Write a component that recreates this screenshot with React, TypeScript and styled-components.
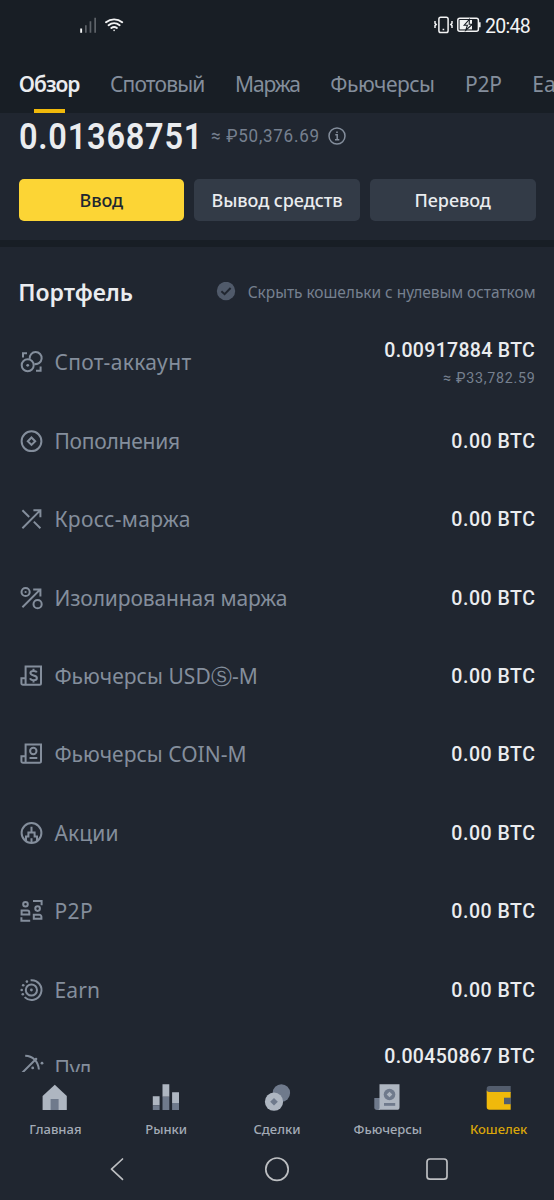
import React, { ReactNode } from 'react';
import styled, { createGlobalStyle } from 'styled-components';

const color = {
  header: '#181e25',
  body: '#202630',
  button: '#333b47',
  text: '#eaecef',
  muted: '#848e9c',
  dim: '#76808f',
  yellow: '#fcd535',
  gold: '#f0b90b',
};

const GlobalStyle = createGlobalStyle`
  * { box-sizing: border-box; }
  body { margin: 0; background: ${color.body}; font-family: "Noto Sans", Roboto, "Liberation Sans", sans-serif; }
`;

const Screen = styled.div`
  display: flex;
  flex-direction: column;
  width: 554px;
  height: 1200px;
  overflow: hidden;
  background: ${color.body};
`;

const Header = styled.header`
  flex: none;
  height: 113px;
  background: ${color.header};
`;

const StatusBar = styled.div`
  display: flex;
  align-items: center;
  height: 50px;
  padding: 0 24px 0 79px;
`;

const StatusGroup = styled.div<{ $end?: boolean }>`
  display: flex;
  align-items: center;
  gap: ${(p) => (p.$end ? 4 : 6)}px;
  margin-left: ${(p) => (p.$end ? 'auto' : '0')};
`;

const Clock = styled.span`
  color: #f2f3f4;
  font-family: Roboto, sans-serif;
  font-size: 19.5px;
  line-height: 24px;
  letter-spacing: -0.7px;
  padding-top: 3px;
`;

const Tabs = styled.nav`
  display: flex;
  gap: 30.6px;
  height: 63px;
  padding-left: 18.8px;
  overflow: hidden;
`;

const Tab = styled.a<{ $active?: boolean; $spacing: number }>`
  flex: none;
  display: flex;
  flex-direction: column;
  align-items: center;
  justify-content: space-between;
  padding-top: 20px;
  color: ${(p) => (p.$active ? color.text : color.muted)};
  font-size: 21px;
  font-weight: ${(p) => (p.$active ? 600 : 400)};
  line-height: 28px;
  letter-spacing: ${(p) => p.$spacing}px;
  white-space: nowrap;
`;

const TabMark = styled.span`
  width: 31px;
  height: 4px;
  background: ${color.gold};
`;

const Balance = styled.section`
  flex: none;
  height: 127px;
  padding: 4px 18.5px 0;
`;

const BalanceLine = styled.div`
  display: flex;
  align-items: center;
  height: 40px;
  font-family: Roboto, "Noto Sans", sans-serif;
`;

const Amount = styled.strong`
  width: 191.5px;
  margin-left: 0.8px;
  color: ${color.text};
  font-size: 37px;
  font-weight: 600;
  line-height: 40px;
  letter-spacing: 0.85px;
  transform: scaleX(0.88);
  transform-origin: left;
`;

const Fiat = styled.span`
  width: 116px;
  margin-bottom: 3px;
  color: ${color.dim};
  font-size: 18.5px;
  letter-spacing: 0.8px;
  white-space: nowrap;
  transform: scaleX(0.92);
  transform-origin: left;
`;

const Actions = styled.div`
  display: grid;
  grid-template-columns: repeat(3, 1fr);
  gap: 10px;
  margin-top: 22px;
`;

const ActionButton = styled.button<{ $primary?: boolean }>`
  height: 42px;
  padding: 0;
  border: 0;
  border-radius: 5px;
  background: ${(p) => (p.$primary ? color.yellow : color.button)};
  color: ${(p) => (p.$primary ? '#202630' : color.text)};
  font-family: inherit;
  font-size: 18px;
  font-weight: 500;
  letter-spacing: -0.05px;
`;

const Divider = styled.div`
  flex: none;
  height: 7px;
  background: ${color.header};
`;

const Portfolio = styled.section`
  flex: none;
  height: 825px;
  overflow: hidden;
`;

const PortfolioHead = styled.div`
  display: flex;
  align-items: center;
  justify-content: space-between;
  height: 76px;
  padding: 14px 18.5px 0 18.2px;
`;

const Title = styled.h2`
  margin: 0;
  color: ${color.text};
  font-size: 23px;
  font-weight: 600;
  line-height: 30px;
`;

const HideZero = styled.label`
  display: flex;
  align-items: center;
  gap: 12px;
  color: ${color.dim};
  font-size: 15.5px;
  letter-spacing: -0.04px;
`;

const WalletRow = styled.div`
  display: flex;
  align-items: center;
  height: 78.45px;
  padding: 0 19px;
`;

const WalletName = styled.span<{ $spacing: number }>`
  margin-left: 11.4px;
  color: ${color.muted};
  font-size: 21px;
  line-height: 28px;
  letter-spacing: ${(p) => p.$spacing}px;
`;

const WalletValue = styled.div<{ $double?: boolean }>`
  display: flex;
  flex-direction: column;
  align-items: flex-end;
  margin-left: auto;
  padding-top: ${(p) => (p.$double ? 3 : 0)}px;
  font-family: Roboto, "Noto Sans", sans-serif;
`;

const Coins = styled.span<{ $spacing: number }>`
  margin-right: ${(p) => -p.$spacing}px;
  color: ${color.text};
  font-size: 21px;
  font-weight: 500;
  line-height: 28px;
  letter-spacing: ${(p) => p.$spacing}px;
  transform: scaleX(0.93);
  transform-origin: right;
`;

const Approx = styled.span`
  margin-right: -0.8px;
  color: ${color.dim};
  font-size: 15.5px;
  line-height: 28px;
  letter-spacing: 0.8px;
  transform: scaleX(0.92);
  transform-origin: right;
`;

const BottomNav = styled.nav`
  flex: none;
  display: grid;
  grid-template-columns: repeat(5, 1fr);
  height: 70px;
  padding-top: 12px;
`;

const NavItem = styled.a<{ $active?: boolean }>`
  display: flex;
  flex-direction: column;
  align-items: center;
  gap: 7px;
  color: ${(p) => (p.$active ? '#d9a50a' : '#a3abb6')};
  font-size: 13px;
  font-weight: 500;
  line-height: 20px;
`;

const SystemNav = styled.div`
  flex: none;
  display: flex;
  justify-content: center;
  gap: 132px;
  height: 58px;
  padding-top: 13px;
`;

const GlyphSvg = styled.svg`
  flex: none;
  overflow: visible;
`;

const Glyph = ({ children }: { children: ReactNode }) => (
  <GlyphSvg width="24" height="24" viewBox="0 0 24 24" fill="none" stroke={color.muted} strokeWidth="2">
    {children}
  </GlyphSvg>
);

const futuresFrame = <path d="M6.6 20.8V2.4H22V19.3a1.5 1.5 0 0 1-1.5 1.5H4a1.6 1.6 0 0 1-1.6-1.6V14.2H6.6V20.8" />;

const icons = {
  spot: (
    <Glyph>
      <path d="M10.7 8.8A6 6 0 1 1 15.5 14" />
      <circle cx="8.7" cy="15.3" r="6" />
      <circle cx="8.7" cy="15.3" r="1.4" fill={color.muted} stroke="none" />
      <path d="M4 7.6V3.2H8M17 20.8h4.6V16.4" />
    </Glyph>
  ),
  funding: (
    <Glyph>
      <circle cx="12.5" cy="12.2" r="9.9" />
      <path d="M12.5 8.5 16.2 12.2 12.5 15.9 8.8 12.2Z" />
    </Glyph>
  ),
  cross: (
    <Glyph>
      <path d="M3.4 21.2 21.2 3.4M14.4 3.3H21.4V10.3M3.4 3.2 10.2 10M14.8 14.6 21.4 21.2" />
    </Glyph>
  ),
  isolated: (
    <Glyph>
      <circle cx="6.6" cy="6" r="4.1" />
      <circle cx="6.6" cy="6" r="1.1" fill={color.muted} stroke="none" />
      <circle cx="18.6" cy="18.2" r="4.1" />
      <path d="M3.4 21.2 21 3.6M14.2 3.4H21.4V10.6" />
    </Glyph>
  ),
  usdm: (
    <Glyph>
      {futuresFrame}
      <path d="M17.8 8.4c-.4-1.1-1.5-1.5-3.3-1.5-1.9 0-3.1.8-3.1 2.2 0 3.3 6.5 1.4 6.5 4.9 0 1.5-1.2 2.3-3.2 2.3-2 0-3.2-.7-3.6-2M14.5 4.8v2M14.5 16.3v2.2" />
    </Glyph>
  ),
  coinm: (
    <Glyph>
      {futuresFrame}
      <circle cx="14.3" cy="9" r="3.2" />
      <path d="M10.5 16h7.8" />
    </Glyph>
  ),
  stocks: (
    <Glyph>
      <circle cx="12.5" cy="12" r="9.9" />
      <path d="M7 20V15.4H9.4V11.4H12.5M18 20V15.4H15.6V11.4H12.5M12.5 11.4V5.8M12.5 17.2V21.5" />
    </Glyph>
  ),
  p2p: (
    <Glyph>
      <circle cx="6.5" cy="5.2" r="2.3" />
      <path d="M2.6 15.6V11.5H8.3a2 2 0 0 1 2 2v2.1Z" />
      <circle cx="18.6" cy="9.6" r="2.3" />
      <path d="M14.8 19.8V15.8H20.4a2 2 0 0 1 2 2v2Z" />
      <path d="M14 2.1H22.6V6.2M2.4 18.2V21.8H11.2" />
    </Glyph>
  ),
  earn: (
    <Glyph>
      <path d="M11.6 2.2A9.9 9.9 0 1 1 5.6 19.1" />
      <circle cx="12.4" cy="12" r="5.6" />
      <g fill={color.muted} stroke="none">
        <circle cx="12.4" cy="12" r="1.4" />
        <circle cx="7.9" cy="3.6" r="1.3" />
        <circle cx="4.2" cy="7.2" r="1.3" />
        <circle cx="2.7" cy="12" r="1.3" />
        <circle cx="3.8" cy="16.2" r="1.3" />
      </g>
    </Glyph>
  ),
  pool: (
    <Glyph>
      <path d="M3 17 17 3M6.2 -.3C13.5 -.1 19.2 5 19.9 13.5" />
      <g fill={color.muted} stroke="none">
        <circle cx="23" cy="7.2" r="1.4" />
        <circle cx="13.7" cy="11.9" r="1.4" />
        <circle cx="17" cy="3.1" r="1.3" />
      </g>
    </Glyph>
  ),
};

interface Wallet {
  icon: keyof typeof icons;
  name: string;
  nameSpacing: number;
  coins: string;
  approx?: string;
}

const wallets: Wallet[] = [
  { icon: 'spot', name: 'Спот-аккаунт', nameSpacing: 0.35, coins: '0.00917884', approx: '≈ ₽33,782.59' },
  { icon: 'funding', name: 'Пополнения', nameSpacing: -0.25, coins: '0.00' },
  { icon: 'cross', name: 'Кросс-маржа', nameSpacing: 0.3, coins: '0.00' },
  { icon: 'isolated', name: 'Изолированная маржа', nameSpacing: -0.12, coins: '0.00' },
  { icon: 'usdm', name: 'Фьючерсы USDⓈ-M', nameSpacing: 0.05, coins: '0.00' },
  { icon: 'coinm', name: 'Фьючерсы COIN-M', nameSpacing: 0.03, coins: '0.00' },
  { icon: 'stocks', name: 'Акции', nameSpacing: 0.14, coins: '0.00' },
  { icon: 'p2p', name: 'P2P', nameSpacing: 0.5, coins: '0.00' },
  { icon: 'earn', name: 'Earn', nameSpacing: 0.2, coins: '0.00' },
  { icon: 'pool', name: 'Пул', nameSpacing: -0.2, coins: '0.00450867', approx: '≈ ₽16,594.10' },
];

const tabs = [
  { label: 'Обзор', spacing: -1 },
  { label: 'Спотовый', spacing: -0.87 },
  { label: 'Маржа', spacing: -1.1 },
  { label: 'Фьючерсы', spacing: -0.5 },
  { label: 'P2P', spacing: -0.3 },
  { label: 'Earn', spacing: 0 },
];

const light = '#aeb6c1';
const shade = '#6f7a8c';

const NavGlyph = ({ children }: { children: ReactNode }) => (
  <svg width="28" height="28" viewBox="0 0 28 28">{children}</svg>
);

const navItems = [
  {
    label: 'Главная',
    icon: (
      <NavGlyph>
        <path d="M13.8.7 25.8 12V26H1.6V12Z" fill={light} />
        <path d="M9.6 15h8v11h-8Z" fill={shade} />
      </NavGlyph>
    ),
  },
  {
    label: 'Рынки',
    icon: (
      <NavGlyph>
        <path d="M.8 12.2h6.8v9H.8ZM10.5.2h6.8v12.5h-6.8ZM20.1 8.2H27V19h-6.9Z" fill={light} />
        <path d="M.8 21.2h6.8V26H.8ZM10.5 12.7h6.8V26h-6.8ZM20.1 19H27v7h-6.9Z" fill={shade} />
      </NavGlyph>
    ),
  },
  {
    label: 'Сделки',
    icon: (
      <NavGlyph>
        <circle cx="18.4" cy="9" r="8.7" fill={shade} />
        <circle cx="11" cy="17.7" r="9.1" fill={light} />
        <path d="M11 13.9 14.8 17.7 11 21.5 7.2 17.7Z" fill={shade} />
      </NavGlyph>
    ),
  },
  {
    label: 'Фьючерсы',
    icon: (
      <NavGlyph>
        <path d="M.3 14H6v12H3a2.7 2.7 0 0 1-2.7-2.7Z" fill={shade} />
        <path d="M5.5.3h20v22.9A2.6 2.6 0 0 1 22.9 25.8H4.2A2 2 0 0 0 5.5 24Z" fill={light} />
        <circle cx="15.5" cy="10.5" r="5.8" fill={shade} />
        <path d="M15.5 7.7 18.3 10.5 15.5 13.3 12.7 10.5Z" fill={light} />
        <path d="M10 19h11.2v2.8H10Z" fill={shade} />
      </NavGlyph>
    ),
  },
  {
    label: 'Кошелек',
    icon: (
      <NavGlyph>
        <path d="M4.5 2H25.7V9H1.7V4.8A2.8 2.8 0 0 1 4.5 2Z" fill="#535d6d" />
        <path d="M1.7 6.2A2.5 2.5 0 0 0 4 8H25.7V25.8H4.5A2.8 2.8 0 0 1 1.7 23Z" fill={color.gold} />
        <path d="M19 13.7h7v6.5H19Z" fill="#535d6d" />
      </NavGlyph>
    ),
  },
];

const Signal = () => (
  <svg width="20" height="18" viewBox="0 0 20 18">
    <path d="M1.2 12.5h1.9v4.3H1.2Z" fill="#f2f3f4" />
    <path d="M6 9.2h1.7v7.6H6ZM10.6 5.3h1.7v11.5h-1.7ZM15.3 1.7H17v15.1h-1.7Z" fill="#5d6268" />
  </svg>
);

const Wifi = () => (
  <svg width="19" height="18" viewBox="0 0 19 18" fill="none" stroke="#f2f3f4" strokeWidth="1.9" strokeLinecap="round">
    <path d="M1 6.2A13 13 0 0 1 17.2 6.2M3.6 9.2A8.8 8.8 0 0 1 14.6 9.2M6.3 12A4.6 4.6 0 0 1 11.9 12" />
    <circle cx="9.1" cy="14.4" r=".8" fill="#f2f3f4" stroke="none" />
  </svg>
);

const Vibrate = () => (
  <svg width="19" height="18" viewBox="0 0 19 18" fill="none" stroke="#f2f3f4" strokeWidth="1.5">
    <rect x="4.9" y="1.2" width="9.2" height="15.4" rx="1.8" />
    <path d="M8.6 13.4h1.6M1 5v2.2l1.2 1.2-1.2 1.2v2.4M18 5v2.2l-1.2 1.2 1.2 1.2v2.4" />
  </svg>
);

const Battery = () => (
  <svg width="24" height="18" viewBox="0 0 24 18">
    <rect x=".8" y="2.2" width="20.6" height="13" rx="2" fill="none" stroke="#f2f3f4" strokeWidth="1.5" />
    <path d="M22 6.2h1.6v5H22Z" fill="#f2f3f4" />
    <path d="M2.6 4H15V13.4H2.6Z" fill="#f2f3f4" />
    <path d="M12.4 3.4 7.2 9.2h3.2L8.8 14.2 15.4 8.2h-3.2Z" fill="#f2f3f4" stroke={color.header} strokeWidth="1.1" />
  </svg>
);

const Info = () => (
  <svg width="20" height="20" viewBox="0 0 20 20" fill="none" stroke={color.muted} strokeWidth="1.5">
    <circle cx="10" cy="9" r="8" />
    <path d="M8.3 7.8H10.2V12.6M8 12.7h4.3M9.2 5.2h1.6" />
  </svg>
);

const Check = () => (
  <svg width="20" height="20" viewBox="0 0 20 20">
    <circle cx="10" cy="9" r="9.2" fill="#505a6a" />
    <path d="M5.4 9.2 8.6 12.2 14.6 6" fill="none" stroke={color.body} strokeWidth="2" />
  </svg>
);

const SystemGlyph = ({ children }: { children: ReactNode }) => (
  <svg width="28" height="32" viewBox="0 0 28 32" fill="none" stroke="#bdbfc2" strokeWidth="1.7" strokeLinecap="round" strokeLinejoin="round">
    {children}
  </svg>
);

export default function App() {
  return (
    <Screen>
      <GlobalStyle />
      <Header>
        <StatusBar>
          <StatusGroup>
            <Signal />
            <Wifi />
          </StatusGroup>
          <StatusGroup $end>
            <Vibrate />
            <Battery />
            <Clock>20:48</Clock>
          </StatusGroup>
        </StatusBar>
        <Tabs>
          {tabs.map((tab, i) => (
            <Tab key={tab.label} $active={i === 0} $spacing={tab.spacing}>
              {tab.label}
              {i === 0 && <TabMark />}
            </Tab>
          ))}
        </Tabs>
      </Header>

      <Balance>
        <BalanceLine>
          <Amount>0.01368751</Amount>
          <Fiat>≈ ₽50,376.69</Fiat>
          <Info />
        </BalanceLine>
        <Actions>
          <ActionButton $primary>Ввод</ActionButton>
          <ActionButton>Вывод средств</ActionButton>
          <ActionButton>Перевод</ActionButton>
        </Actions>
      </Balance>

      <Divider />

      <Portfolio>
        <PortfolioHead>
          <Title>Портфель</Title>
          <HideZero>
            <Check />
            Скрыть кошельки с нулевым остатком
          </HideZero>
        </PortfolioHead>
        {wallets.map((wallet) => (
          <WalletRow key={wallet.name}>
            {icons[wallet.icon]}
            <WalletName $spacing={wallet.nameSpacing}>{wallet.name}</WalletName>
            <WalletValue $double={!!wallet.approx}>
              <Coins $spacing={wallet.approx ? 0.32 : 0.55}>{wallet.coins} BTC</Coins>
              {wallet.approx && <Approx>{wallet.approx}</Approx>}
            </WalletValue>
          </WalletRow>
        ))}
      </Portfolio>

      <BottomNav>
        {navItems.map((item) => (
          <NavItem key={item.label} $active={item.label === 'Кошелек'}>
            {item.icon}
            {item.label}
          </NavItem>
        ))}
      </BottomNav>

      <SystemNav>
        <SystemGlyph>
          <path d="M19.5 4 8.5 14.2 19.5 24.4" />
        </SystemGlyph>
        <SystemGlyph>
          <circle cx="14" cy="14.2" r="11.2" />
        </SystemGlyph>
        <SystemGlyph>
          <rect x="4" y="4" width="20" height="20.2" rx="3" />
        </SystemGlyph>
      </SystemNav>
    </Screen>
  );
}
